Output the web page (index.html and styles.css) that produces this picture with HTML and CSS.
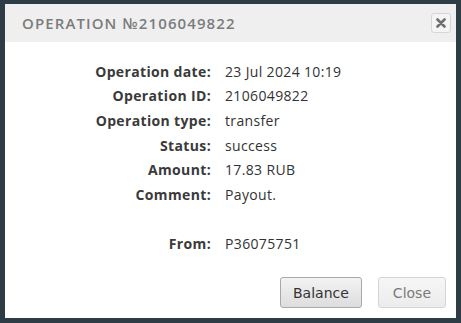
FILE: index.html
```html
<!DOCTYPE html>
<html>
<head>
    <title>Operation</title>
    <link rel="stylesheet" href="styles.css">
</head>
<body>
    <div class="dialog">
        <div class="dialog-header">
            <span class="dialog-title">Operation №2106049822</span>
            <button type="button" class="close-x">
                <svg width="10" height="10" viewBox="0 0 10 10"><path d="M1.5 1.5 L8.5 8.5 M8.5 1.5 L1.5 8.5" stroke="#6f6f6f" stroke-width="2.6" stroke-linecap="round"/></svg>
            </button>
        </div>
        <div class="dialog-body">
            <div class="info">
                <div class="label">Operation date:</div><div class="value">23 Jul 2024 10:19</div>
                <div class="label">Operation ID:</div><div class="value">2106049822</div>
                <div class="label">Operation type:</div><div class="value">transfer</div>
                <div class="label">Status:</div><div class="value">success</div>
                <div class="label">Amount:</div><div class="value">17.83 RUB</div>
                <div class="label">Comment:</div><div class="value">Payout.</div>
                <div class="label"></div><div class="value"></div>
                <div class="label">From:</div><div class="value">P36075751</div>
            </div>
        </div>
        <div class="dialog-footer">
            <button type="button" class="btn">Balance</button>
            <button type="button" class="btn btn-light">Close</button>
        </div>
    </div>
</body>
</html>
```
FILE: styles.css
```css
body {
    margin: 0;
    padding: 4px 5px 5px 5px;
    background: #2e3c46;
    font-family: "Open Sans", sans-serif;
    height: 323px;
    box-sizing: border-box;
}
.dialog {
    background: #fff;
    height: 314px;
    display: flex;
    flex-direction: column;
}
.dialog-header {
    background: #efefef;
    height: 38px;
    display: flex;
    align-items: center;
    justify-content: space-between;
    padding: 0 5px 0 17px;
}
.dialog-title {
    text-transform: uppercase;
    color: #7c7c7c;
    font-size: 15px;
    font-weight: 600;
    letter-spacing: 1.1px;
}
.close-x {
    width: 20px;
    height: 20px;
    padding: 0;
    border: 1px solid #d6d6d6;
    border-radius: 3px;
    background: #f4f4f4;
    display: flex;
    align-items: center;
    justify-content: center;
}
.dialog-body {
    flex: 1;
    padding-top: 17px;
}
.info {
    display: grid;
    grid-template-columns: 206px auto;
    grid-auto-rows: 24.6px;
    column-gap: 14px;
    font-size: 14px;
    letter-spacing: 0.35px;
    color: #333;
    align-items: center;
}
.label {
    text-align: right;
    font-weight: 700;
    color: #3a3a3a;
}
.value {
    color: #333;
}
.dialog-footer {
    display: flex;
    justify-content: flex-end;
    gap: 16px;
    padding: 0 10px 10px 0;
}
.btn {
    font-family: "DejaVu Sans", sans-serif;
    font-size: 14px;
    color: #333;
    height: 31px;
    padding: 0 12px;
    border: 1px solid #a9a9a9;
    border-radius: 3px;
    background: linear-gradient(#f3f3f3, #dddddd);
}
.btn-light {
    padding: 0 14px;
    color: #7a7a7a;
    border-color: #d4d4d4;
    background: linear-gradient(#f6f6f6, #ececec);
}
```
